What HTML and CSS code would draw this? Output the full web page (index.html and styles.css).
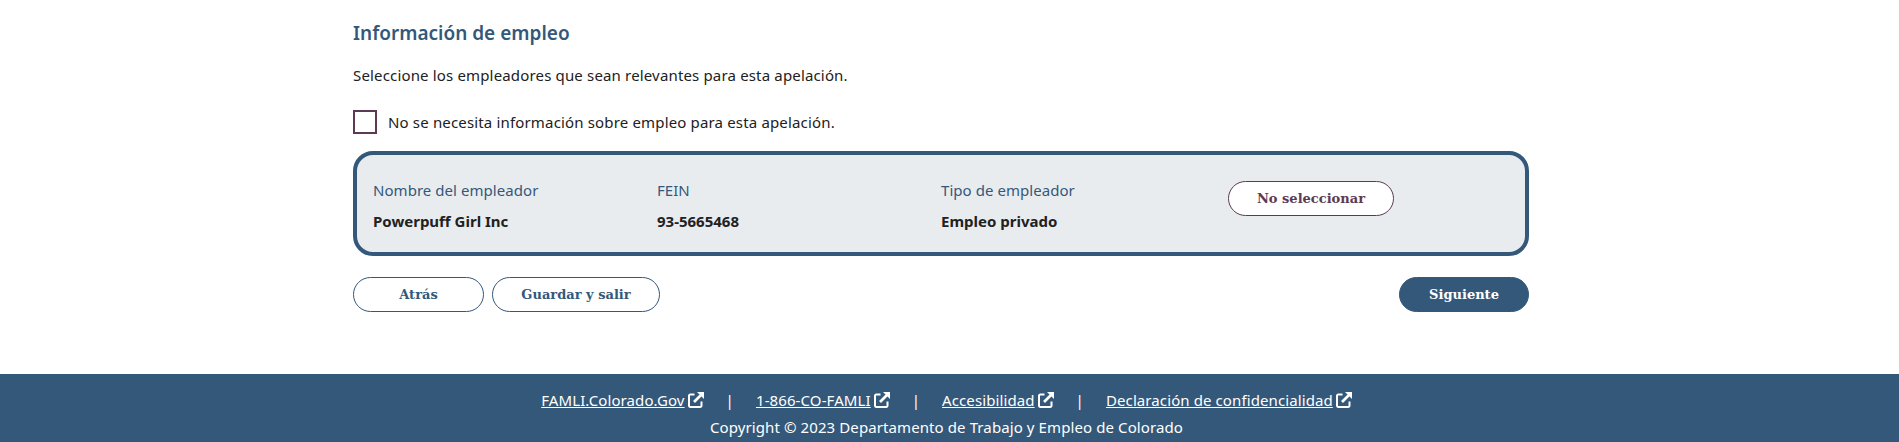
FILE: index.html
```html
<!DOCTYPE html>
<html lang="es">
<head>
  <meta charset="UTF-8">
  <meta name="viewport" content="width=device-width, initial-scale=1.0">
  <title>Información de empleo</title>
  <link rel="stylesheet" href="styles.css">
</head>
<body>
  <main class="content">
    <h2 class="section-title">Información de empleo</h2>
    <p class="intro">Seleccione los empleadores que sean relevantes para esta apelación.</p>

    <label class="check-row">
      <span class="check-box"></span>
      <span>No se necesita información sobre empleo para esta apelación.</span>
    </label>

    <div class="employer-card">
      <div class="employer-col">
        <span class="employer-label">Nombre del empleador</span>
        <span class="employer-value">Powerpuff Girl Inc</span>
      </div>
      <div class="employer-col">
        <span class="employer-label">FEIN</span>
        <span class="employer-value">93-5665468</span>
      </div>
      <div class="employer-col">
        <span class="employer-label">Tipo de empleador</span>
        <span class="employer-value">Empleo privado</span>
      </div>
      <div class="employer-action">
        <button class="btn btn-deselect">No seleccionar</button>
      </div>
    </div>

    <div class="actions">
      <div class="actions-left">
        <button class="btn btn-outline btn-back">Atrás</button>
        <button class="btn btn-outline btn-save">Guardar y salir</button>
      </div>
      <button class="btn btn-primary">Siguiente</button>
    </div>
  </main>

  <footer class="footer">
    <div class="footer-links">
      <a href="#" class="footer-link"><span>FAMLI.Colorado.Gov</span><svg class="ext-icon" viewBox="0 0 16 16"><path d="M6.5 2.5H2.2A1.2 1.2 0 0 0 1 3.7v10.1A1.2 1.2 0 0 0 2.2 15h10.1a1.2 1.2 0 0 0 1.2-1.2V9.5" fill="none" stroke="#fff" stroke-width="2"/><path d="M6 10 14 2" fill="none" stroke="#fff" stroke-width="2.6"/><path d="M9 0h7v7z" fill="#fff"/></svg></a>
      <span class="sep">|</span>
      <a href="#" class="footer-link"><span>1-866-CO-FAMLI</span><svg class="ext-icon" viewBox="0 0 16 16"><path d="M6.5 2.5H2.2A1.2 1.2 0 0 0 1 3.7v10.1A1.2 1.2 0 0 0 2.2 15h10.1a1.2 1.2 0 0 0 1.2-1.2V9.5" fill="none" stroke="#fff" stroke-width="2"/><path d="M6 10 14 2" fill="none" stroke="#fff" stroke-width="2.6"/><path d="M9 0h7v7z" fill="#fff"/></svg></a>
      <span class="sep">|</span>
      <a href="#" class="footer-link"><span>Accesibilidad</span><svg class="ext-icon" viewBox="0 0 16 16"><path d="M6.5 2.5H2.2A1.2 1.2 0 0 0 1 3.7v10.1A1.2 1.2 0 0 0 2.2 15h10.1a1.2 1.2 0 0 0 1.2-1.2V9.5" fill="none" stroke="#fff" stroke-width="2"/><path d="M6 10 14 2" fill="none" stroke="#fff" stroke-width="2.6"/><path d="M9 0h7v7z" fill="#fff"/></svg></a>
      <span class="sep">|</span>
      <a href="#" class="footer-link"><span>Declaración de confidencialidad</span><svg class="ext-icon" viewBox="0 0 16 16"><path d="M6.5 2.5H2.2A1.2 1.2 0 0 0 1 3.7v10.1A1.2 1.2 0 0 0 2.2 15h10.1a1.2 1.2 0 0 0 1.2-1.2V9.5" fill="none" stroke="#fff" stroke-width="2"/><path d="M6 10 14 2" fill="none" stroke="#fff" stroke-width="2.6"/><path d="M9 0h7v7z" fill="#fff"/></svg></a>
    </div>
    <div class="copyright">Copyright © 2023 Departamento de Trabajo y Empleo de Colorado</div>
  </footer>
</body>
</html>
```

FILE: styles.css
```css
* {
  box-sizing: border-box;
}

body {
  margin: 0;
  font-family: "Noto Sans", sans-serif;
  font-size: 15px;
  color: #212121;
  background-color: #fff;
}

.content {
  width: 1176px;
  margin-left: 353px;
  padding-top: 20px;
  height: 374px;
}

.section-title {
  margin: 0;
  font-size: 19px;
  line-height: 26px;
  font-weight: 600;
  color: #34587a;
}

.intro {
  margin: 17px 0 0;
  line-height: 24px;
  letter-spacing: 0.16px;
}

.check-row {
  display: flex;
  align-items: center;
  gap: 11px;
  margin-top: 23px;
  letter-spacing: 0.16px;
}

.check-box {
  width: 24px;
  height: 24px;
  border: 2px solid #5c3a54;
  background-color: #fff;
}

.employer-card {
  display: grid;
  grid-template-columns: repeat(4, 284px);
  height: 105px;
  margin-top: 17px;
  padding: 26px 16px 0;
  background-color: #e9ecef;
  border: 4px solid #34587a;
  border-radius: 20px;
}

.employer-col {
  display: flex;
  flex-direction: column;
  gap: 12px;
}

.employer-label {
  line-height: 19px;
  letter-spacing: 0.05px;
  color: #34587a;
}

.employer-value {
  line-height: 19px;
  font-weight: 700;
}

.btn {
  height: 35px;
  padding: 0;
  font-family: "DejaVu Serif", serif;
  font-size: 13px;
  font-weight: 700;
  border-radius: 18px;
  cursor: pointer;
}

.btn-deselect {
  width: 166px;
  margin-left: 3px;
  color: #5c3a54;
  background-color: #fff;
  border: 1px solid #5c3a54;
}

.actions {
  display: flex;
  justify-content: space-between;
  margin-top: 21px;
}

.actions-left {
  display: flex;
  gap: 8px;
}

.btn-outline {
  color: #34587a;
  background-color: #fff;
  border: 1px solid #34587a;
}

.btn-back {
  width: 131px;
}

.btn-save {
  width: 168px;
}

.btn-primary {
  width: 130px;
  color: #fff;
  background-color: #34587a;
  border: 1px solid #34587a;
}

.footer {
  height: 68px;
  padding-top: 14px;
  text-align: center;
  color: #fff;
  background-color: #34587a;
}

.footer-links {
  display: flex;
  justify-content: center;
  align-items: center;
  gap: 22px;
  height: 24px;
  padding-right: 6px;
  letter-spacing: 0.1px;
}

.footer-link {
  display: flex;
  align-items: center;
  gap: 3px;
  color: #fff;
}

.ext-icon {
  width: 16px;
  height: 16px;
}

.copyright {
  margin-top: 3px;
  padding-right: 6px;
  line-height: 24px;
  letter-spacing: 0.1px;
}
```
